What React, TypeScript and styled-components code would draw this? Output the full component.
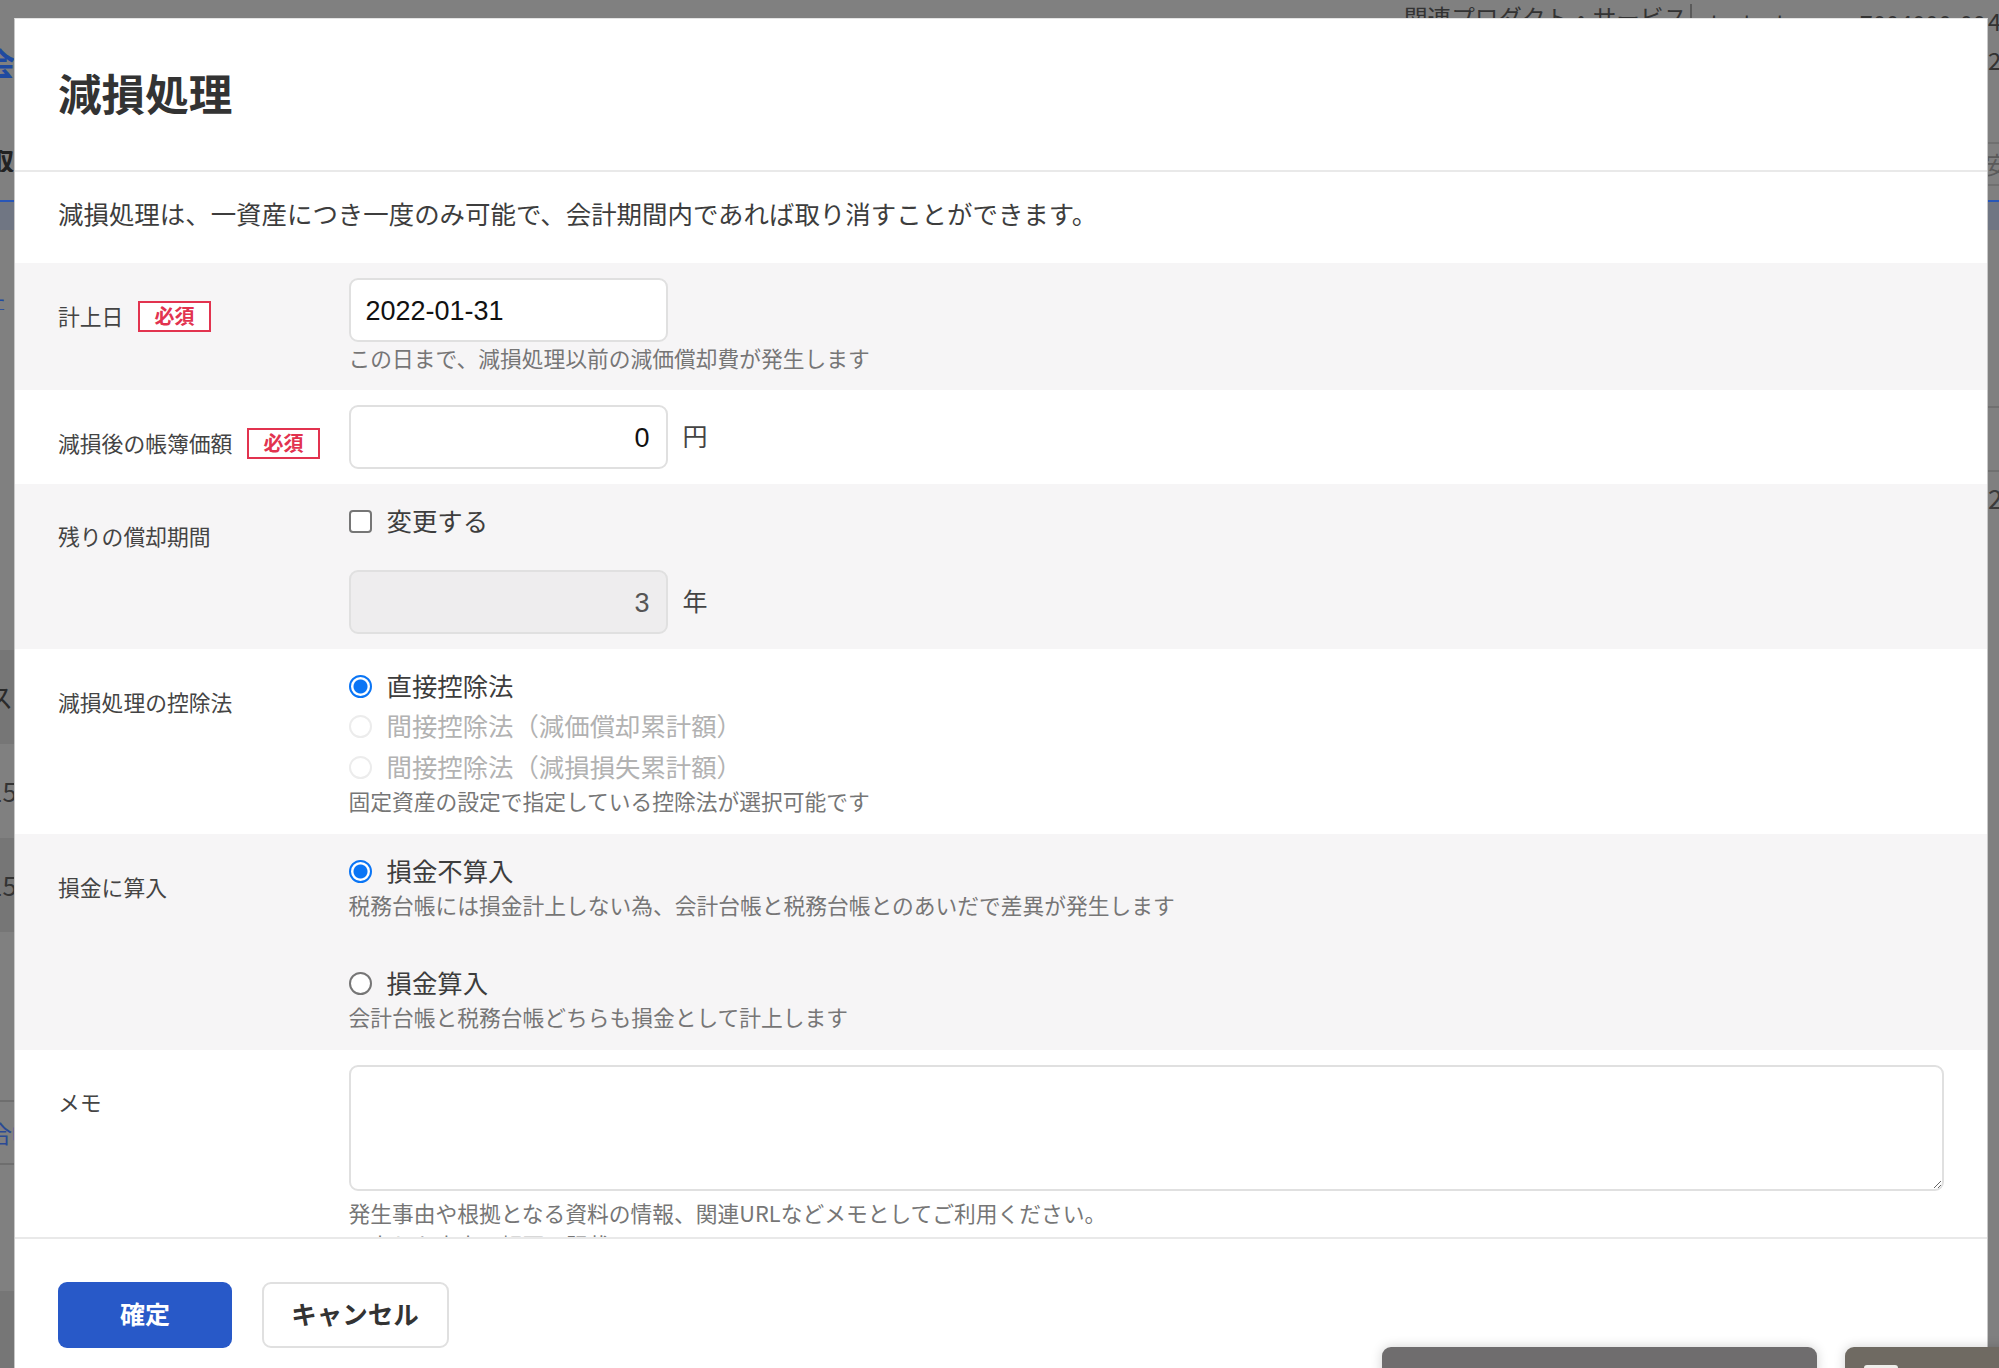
import React from "react";
import styled, { createGlobalStyle } from "styled-components";

const GlobalStyle = createGlobalStyle`
  html, body { margin: 0; padding: 0; height: 100%; }
  body { font-family: "Noto Sans CJK JP", "Liberation Sans", sans-serif; color: #3a3a3a; }
  * { box-sizing: border-box; }
`;

const latin = `"Liberation Sans", "Noto Sans CJK JP", sans-serif`;

const Page = styled.div`
  position: relative;
  display: flex;
  width: 100%;
  height: 100vh;
  overflow: hidden;
  background: #808080;
`;

const Strip = styled.div<{ $w: number }>`
  flex: 0 0 ${(p) => p.$w}px;
  display: flex;
  flex-direction: column;
  overflow: hidden;
`;

const StripRow = styled.div<{ $h: number; $bg?: string; $line?: string; $accent?: boolean }>`
  flex: 0 0 ${(p) => p.$h}px;
  height: ${(p) => p.$h}px;
  background: ${(p) => p.$bg || "transparent"};
  ${(p) => (p.$line ? `border-top: 2px solid ${p.$line}; border-bottom: 2px solid ${p.$line};` : "")}
  ${(p) => (p.$accent ? "border-top: 2px solid #2856b8;" : "")}
  display: flex;
  align-items: center;
  overflow: hidden;
`;

const StripGlyph = styled.span<{ $size: number; $color: string; $shift: number; $bold?: boolean }>`
  flex: none;
  font-size: ${(p) => p.$size}px;
  line-height: 1;
  color: ${(p) => p.$color};
  font-weight: ${(p) => (p.$bold ? 700 : 400)};
  margin-left: ${(p) => p.$shift}px;
  white-space: nowrap;
`;

const Center = styled.div`
  flex: 1;
  min-width: 0;
  display: flex;
  flex-direction: column;
`;

const TopStrip = styled.div`
  flex: 0 0 18px;
  display: flex;
  align-items: flex-start;
  overflow: hidden;
  padding-left: 1390px;
`;

const TopText = styled.span<{ $gap?: number; $top?: number }>`
  flex: none;
  margin-left: ${(p) => p.$gap || 0}px;
  margin-top: ${(p) => p.$top ?? 4}px;
  font-size: 23.6px;
  line-height: 26px;
  color: #333;
  white-space: nowrap;
`;

const TopDivider = styled.span`
  flex: none;
  width: 2px;
  height: 14px;
  margin: 4px 0 0 3px;
  background: #5a5a5a;
`;

const Modal = styled.div`
  flex: 1;
  min-height: 0;
  display: flex;
  flex-direction: column;
  background: #fff;
  border-left: 1px solid #c8c8c8;
  border-right: 1px solid #c8c8c8;
  border-top: 1px solid #e4e4e4;
`;

const ModalHeader = styled.header`
  flex: 0 0 153px;
  display: flex;
  align-items: center;
  padding: 0 0 4px 43px;
  border-bottom: 2px solid #e9e9e9;
`;

const Title = styled.h1`
  margin: 0;
  font-size: 43.6px;
  line-height: 1.2;
  font-weight: 700;
  color: #333;
`;

const ModalBody = styled.div`
  flex: 1;
  min-height: 0;
  overflow: hidden;
`;

const Intro = styled.p`
  margin: 0;
  height: 91px;
  padding: 0 0 10px 43px;
  display: flex;
  align-items: center;
  font-size: 25.44px;
  color: #3d3d3d;
  white-space: nowrap;
`;

const FormRow = styled.div<{ $h: number; $shaded?: boolean; $pad: number }>`
  display: flex;
  align-items: flex-start;
  height: ${(p) => p.$h}px;
  padding: ${(p) => p.$pad}px 43px 0 43px;
  background: ${(p) => (p.$shaded ? "#f6f5f6" : "#fff")};
`;

const LabelCol = styled.div<{ $top: number }>`
  flex: 0 0 290.5px;
  display: flex;
  align-items: center;
  gap: 14.5px;
  margin-top: ${(p) => p.$top}px;
`;

const LabelText = styled.span`
  font-size: 21.8px;
  line-height: 32px;
  color: #444;
  white-space: nowrap;
`;

const Required = styled.span`
  width: 73px;
  height: 31px;
  display: flex;
  align-items: center;
  justify-content: center;
  border: 2px solid #e2334f;
  background: #fff;
  color: #e2334f;
  font-size: 20px;
  font-weight: 700;
  line-height: 1;
`;

const FieldCol = styled.div`
  flex: 1;
  min-width: 0;
  display: flex;
  flex-direction: column;
  align-items: flex-start;
`;

const InputLine = styled.div<{ $gap?: number }>`
  display: flex;
  align-items: center;
  gap: 15px;
  margin-top: ${(p) => p.$gap ?? 0}px;
`;

const TextInput = styled.input<{ $right?: boolean }>`
  width: 319px;
  height: 64px;
  padding: 3px 16px 0 15px;
  border: 2px solid #e0e0e0;
  border-radius: 9px;
  background: #fff;
  color: #111;
  font-family: ${latin};
  font-size: 27px;
  text-align: ${(p) => (p.$right ? "right" : "left")};
  outline: none;
  &:disabled {
    background: #eeedee;
    color: #555;
    -webkit-text-fill-color: #555;
    opacity: 1;
  }
`;

const Unit = styled.span`
  font-size: 25px;
  line-height: 1;
  color: #444;
  margin-top: -3px;
`;

const Help = styled.p<{ $gap?: number }>`
  margin: ${(p) => p.$gap ?? 0}px 0 0;
  font-size: 21.75px;
  line-height: 32px;
  color: #767676;
  white-space: nowrap;
`;

const CheckLine = styled.label<{ $muted?: boolean; $h?: number; $gap?: number }>`
  display: flex;
  align-items: center;
  gap: 15px;
  height: ${(p) => p.$h ?? 40}px;
  margin-top: ${(p) => p.$gap ?? 0}px;
  font-size: 25.4px;
  color: ${(p) => (p.$muted ? "#b2b2b2" : "#3d3d3d")};
  white-space: nowrap;
`;

const CheckText = styled.span`
  margin-top: -2px;
`;

const CheckBox = styled.input`
  appearance: none;
  flex: none;
  width: 23px;
  height: 23px;
  margin: 0;
  border: 2px solid #767676;
  border-radius: 4px;
  background: #fff;
`;

const Radio = styled.input`
  appearance: none;
  flex: none;
  width: 23px;
  height: 23px;
  margin: 0;
  border: 2px solid #767676;
  border-radius: 50%;
  background: #fff;
  &:checked {
    border-color: #0a75f5;
    background: radial-gradient(circle, #0a75f5 0 6.5px, #fff 7.5px);
  }
  &:disabled {
    border-color: #ececec;
    background: #fff;
  }
`;

const MemoArea = styled.textarea`
  display: block;
  width: 100%;
  height: 126px;
  padding: 10px 16px;
  border: 2px solid #e0e0e0;
  border-radius: 9px;
  background: #fff;
  outline: none;
  resize: vertical;
`;

const MemoField = styled(FieldCol)`
  align-items: stretch;
`;

const ModalFooter = styled.footer`
  flex: 0 0 131px;
  display: flex;
  align-items: flex-start;
  gap: 29.5px;
  padding: 43px 0 0 43px;
  border-top: 2px solid #e9e9e9;
`;

const PrimaryButton = styled.button`
  width: 174px;
  height: 66px;
  padding: 0 0 4px;
  border: none;
  border-radius: 9px;
  background: #2859c8;
  color: #fff;
  font-family: inherit;
  font-size: 25px;
  font-weight: 700;
`;

const SecondaryButton = styled.button`
  width: 187px;
  height: 66px;
  padding: 0 0 6px;
  border: 2px solid #e0e0e0;
  border-radius: 9px;
  background: #fff;
  color: #333;
  font-family: inherit;
  font-size: 25.5px;
  font-weight: 700;
`;

const FloatDock = styled.div`
  position: absolute;
  left: 1382px;
  top: 1347px;
  display: flex;
  gap: 28px;
`;

const FloatCard = styled.div<{ $w: number; $bg: string }>`
  width: ${(p) => p.$w}px;
  height: 60px;
  padding: 18px 0 0 19px;
  border-radius: 9px;
  background: ${(p) => p.$bg};
  box-shadow: 0 0 12px rgba(0, 0, 0, 0.18);
`;

const FloatIcon = styled.div`
  width: 34px;
  height: 20px;
  border-radius: 3px;
  background: #eeeeea;
`;

type Strips = {
  h: number;
  bg?: string;
  line?: string;
  accent?: boolean;
  text?: string;
  size?: number;
  color?: string;
  shift?: number;
  bold?: boolean;
}[];

const leftRows: Strips = [
  { h: 46 },
  { h: 32, text: "会", size: 32, color: "#1f4aa0", shift: -17, bold: true },
  { h: 69 },
  { h: 25, text: "取", size: 26, color: "#222", shift: -12, bold: true },
  { h: 28 },
  { h: 30, bg: "#707683", accent: true },
  { h: 60 },
  { h: 20, text: "た", size: 22, color: "#1f4aa0", shift: -16 },
  { h: 340 },
  { h: 94, bg: "#767676", text: "ス", size: 26, color: "#2a2a2a", shift: -13 },
  { h: 94, text: "15", size: 26, color: "#333", shift: -12 },
  { h: 94, bg: "#767676", text: "15", size: 26, color: "#333", shift: -12 },
  { h: 168 },
  { h: 65, line: "#6e6e6e", text: "合帳", size: 24, color: "#2a4a95", shift: -12 },
  { h: 126 },
  { h: 78, bg: "#767676" },
];

const rightRows: Strips = [
  { h: 9 },
  { h: 24, text: "4", size: 24, color: "#333", shift: 0 },
  { h: 15 },
  { h: 24, text: "22", size: 24, color: "#333", shift: 0 },
  { h: 70 },
  { h: 44, line: "#707070", text: "安", size: 24, color: "#5a5a5a", shift: -3 },
  { h: 14 },
  { h: 30, bg: "#707683", accent: true },
  { h: 176 },
  { h: 66, line: "#707070" },
  { h: 12 },
  { h: 27, text: "2", size: 26, color: "#3a3a3a", shift: 0 },
];

const StripColumn = ({ rows, w }: { rows: Strips; w: number }) => (
  <Strip $w={w}>
    {rows.map((r, i) => (
      <StripRow key={i} $h={r.h} $bg={r.bg} $line={r.line} $accent={r.accent}>
        {r.text && (
          <StripGlyph $size={r.size!} $color={r.color!} $shift={r.shift!} $bold={r.bold}>
            {r.text}
          </StripGlyph>
        )}
      </StripRow>
    ))}
  </Strip>
);

export default function App() {
  return (
    <Page>
      <GlobalStyle />
      <StripColumn rows={leftRows} w={14} />
      <Center>
        <TopStrip>
          <TopText>関連プロダクト・サービス</TopText>
          <TopDivider />
          <TopText $gap={18} $top={9}>t</TopText>
          <TopText $gap={24} $top={9}>t</TopText>
          <TopText $gap={24} $top={9}>t</TopText>
          <TopText $gap={75} $top={10}>7004000-004</TopText>
        </TopStrip>
        <Modal>
          <ModalHeader>
            <Title>減損処理</Title>
          </ModalHeader>
          <ModalBody>
            <Intro>減損処理は、一資産につき一度のみ可能で、会計期間内であれば取り消すことができます。</Intro>

            <FormRow $h={127} $shaded $pad={15}>
              <LabelCol $top={22}>
                <LabelText>計上日</LabelText>
                <Required>必須</Required>
              </LabelCol>
              <FieldCol>
                <TextInput readOnly value="2022-01-31" />
                <Help>この日まで、減損処理以前の減価償却費が発生します</Help>
              </FieldCol>
            </FormRow>

            <FormRow $h={94} $pad={15}>
              <LabelCol $top={22}>
                <LabelText>減損後の帳簿価額</LabelText>
                <Required>必須</Required>
              </LabelCol>
              <FieldCol>
                <InputLine>
                  <TextInput $right readOnly value="0" />
                  <Unit>円</Unit>
                </InputLine>
              </FieldCol>
            </FormRow>

            <FormRow $h={165} $shaded $pad={14}>
              <LabelCol $top={22}>
                <LabelText>残りの償却期間</LabelText>
              </LabelCol>
              <FieldCol>
                <CheckLine $h={46}>
                  <CheckBox type="checkbox" />
                  <CheckText>変更する</CheckText>
                </CheckLine>
                <InputLine $gap={26}>
                  <TextInput $right disabled value="3" />
                  <Unit>年</Unit>
                </InputLine>
              </FieldCol>
            </FormRow>

            <FormRow $h={185} $pad={17}>
              <LabelCol $top={20}>
                <LabelText>減損処理の控除法</LabelText>
              </LabelCol>
              <FieldCol>
                <CheckLine>
                  <Radio type="radio" name="method" defaultChecked />
                  <CheckText>直接控除法</CheckText>
                </CheckLine>
                <CheckLine $muted>
                  <Radio type="radio" name="method" disabled />
                  <CheckText>間接控除法（減価償却累計額）</CheckText>
                </CheckLine>
                <CheckLine $muted $gap={1}>
                  <Radio type="radio" name="method" disabled />
                  <CheckText>間接控除法（減損損失累計額）</CheckText>
                </CheckLine>
                <Help $gap={-2}>固定資産の設定で指定している控除法が選択可能です</Help>
              </FieldCol>
            </FormRow>

            <FormRow $h={216} $shaded $pad={17}>
              <LabelCol $top={20}>
                <LabelText>損金に算入</LabelText>
              </LabelCol>
              <FieldCol>
                <CheckLine>
                  <Radio type="radio" name="tax" defaultChecked />
                  <CheckText>損金不算入</CheckText>
                </CheckLine>
                <Help $gap={-2}>税務台帳には損金計上しない為、会計台帳と税務台帳とのあいだで差異が発生します</Help>
                <CheckLine $gap={42}>
                  <Radio type="radio" name="tax" />
                  <CheckText>損金算入</CheckText>
                </CheckLine>
                <Help $gap={-2}>会計台帳と税務台帳どちらも損金として計上します</Help>
              </FieldCol>
            </FormRow>

            <FormRow $h={240} $pad={15}>
              <LabelCol $top={21}>
                <LabelText>メモ</LabelText>
              </LabelCol>
              <MemoField>
                <MemoArea readOnly />
                <Help $gap={6}>発生事由や根拠となる資料の情報、関連URLなどメモとしてご利用ください。</Help>
                <Help>入力した内容は帳票に記載</Help>
              </MemoField>
            </FormRow>
          </ModalBody>
          <ModalFooter>
            <PrimaryButton>確定</PrimaryButton>
            <SecondaryButton>キャンセル</SecondaryButton>
          </ModalFooter>
        </Modal>
      </Center>
      <StripColumn rows={rightRows} w={11} />
      <FloatDock>
        <FloatCard $w={435} $bg="#6f6d6e" />
        <FloatCard $w={200} $bg="#6f6a62">
          <FloatIcon />
        </FloatCard>
      </FloatDock>
    </Page>
  );
}
